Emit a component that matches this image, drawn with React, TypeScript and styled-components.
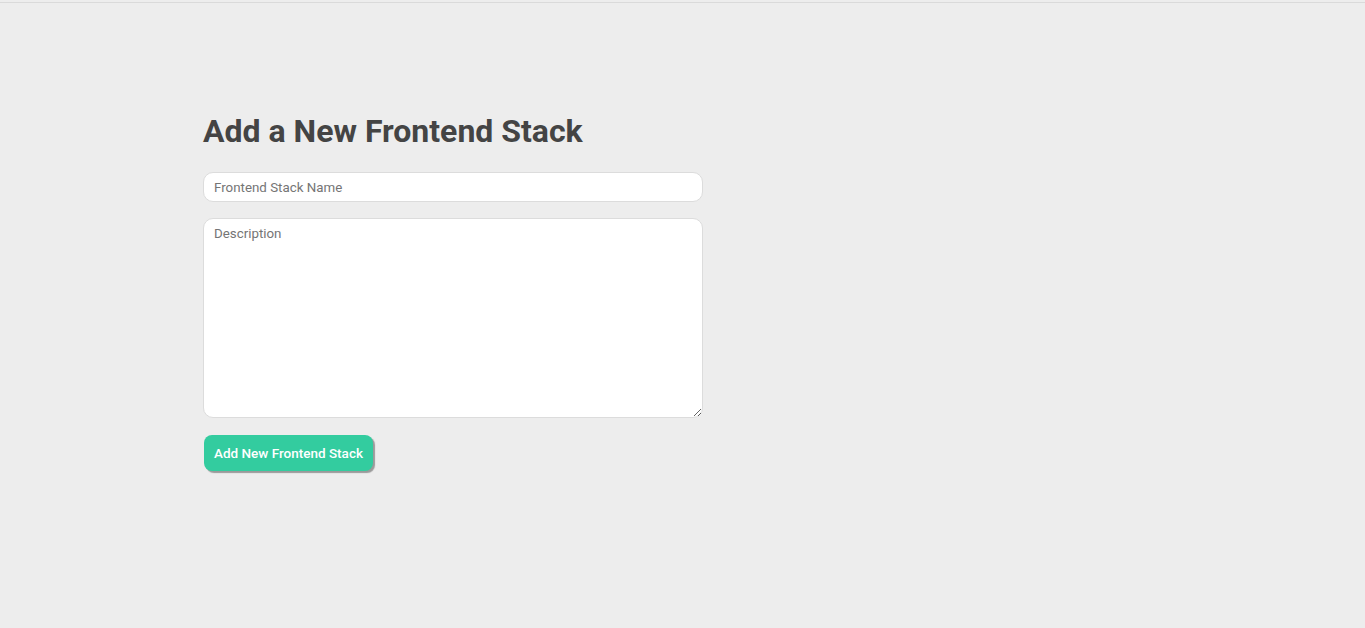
import React from "react";
import styled, { createGlobalStyle } from "styled-components";

const Global = createGlobalStyle`
  html, body { margin: 0; padding: 0; }
  body {
    background: #ededed;
    font-family: Roboto, "Liberation Sans", sans-serif;
    min-height: 628px;
  }
`;

const Page = styled.div`
  min-height: 626px;
  border-top: 1px solid #dadada;
  margin-top: 2px;
  box-sizing: border-box;
  padding: 108px 0 0 203px;
`;

const Form = styled.form`
  width: 500px;
  display: flex;
  flex-direction: column;
  align-items: flex-start;
`;

const Title = styled.h1`
  margin: 0 0 21px;
  font-size: 32px;
  line-height: 40px;
  font-weight: 700;
  color: #444;
`;

const fieldBase = `
  box-sizing: border-box;
  width: 500px;
  border: 1px solid #dcdcdc;
  border-radius: 10px;
  background: #fff;
  font-family: Roboto, "Liberation Sans", sans-serif;
  font-size: 13.333px;
  color: #333;
  padding: 0 10px;
  outline: none;
  &::placeholder { color: #757575; }
`;

const Input = styled.input`
  ${fieldBase}
  height: 30px;
  margin-bottom: 16px;
`;

const TextArea = styled.textarea`
  ${fieldBase}
  height: 200px;
  padding-top: 7px;
  margin-bottom: 17px;
  resize: both;
`;

const Button = styled.button`
  margin-left: 1px;
  height: 36px;
  padding: 0 10px;
  border: none;
  border-radius: 8px;
  background: #33cc9f;
  color: #fff;
  font-family: Roboto, "Liberation Sans", sans-serif;
  font-size: 13.5px;
  font-weight: 500;
  box-shadow: 2px 2px 1px #9a9a9a;
  cursor: pointer;
`;

export default function App() {
  return (
    <>
      <Global />
      <Page>
        <Form onSubmit={(e) => e.preventDefault()}>
          <Title>Add a New Frontend Stack</Title>
          <Input placeholder="Frontend Stack Name" />
          <TextArea placeholder="Description" />
          <Button type="submit">Add New Frontend Stack</Button>
        </Form>
      </Page>
    </>
  );
}
